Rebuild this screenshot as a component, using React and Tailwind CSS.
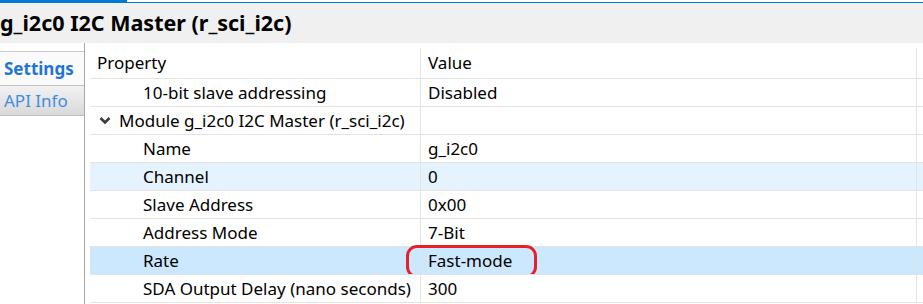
import React from 'react';

const rows = [
    { label: '10-bit slave addressing', value: 'Disabled', indent: true },
    { label: 'Module g_i2c0 I2C Master (r_sci_i2c)', value: '', group: true },
    { label: 'Name', value: 'g_i2c0', indent: true },
    { label: 'Channel', value: '0', indent: true, hover: true },
    { label: 'Slave Address', value: '0x00', indent: true },
    { label: 'Address Mode', value: '7-Bit', indent: true },
    { label: 'Rate', value: 'Fast-mode', indent: true, selected: true, marked: true },
    { label: 'SDA Output Delay (nano seconds)', value: '300', indent: true },
];

const Chevron = () => (
    <svg width="12" height="9" viewBox="0 0 12 9" className="shrink-0">
        <polyline points="1.5 2 6 6.5 10.5 2" fill="none" stroke="#3a3a3a" strokeWidth="2.6" />
    </svg>
);

export default function App() {
    return (
        <div className="w-[923px] h-[304px] overflow-hidden bg-white text-black" style={{ fontFamily: '"Noto Sans", "Open Sans", sans-serif' }}>
            {/* top accent */}
            <div className="flex h-[3px]">
                <div className="w-[127px] bg-[#0078d7]" />
                <div className="flex-1 border-b border-[#0078d7]" />
            </div>

            {/* title */}
            <div className="h-[40px] bg-[#f0f0f0] flex items-center text-[21.5px] font-bold">
                g_i2c0 I2C Master (r_sci_i2c)
            </div>

            <div className="flex">
                {/* tabs */}
                <div className="w-[85px] h-[261px] border-r border-[#a8a8a8] pt-[8px] shrink-0">
                    <div className="h-[34px] border-t border-[#c8c8c8] bg-[#fafafa] flex items-center pl-[4px] text-[17px] font-bold text-[#1f75d6]">
                        Settings
                    </div>
                    <div className="h-[31px] border-t border-b border-[#c0c0c0] bg-gradient-to-b from-[#f2f2f2] to-[#d9d9d9] flex items-center pl-[4px] text-[17px] text-[#3d8ee0]">
                        API Info
                    </div>
                </div>

                {/* property table */}
                <div className="flex-1 pl-[5px] pt-[5px] text-[17px]">
                    <div>
                        <div className="flex h-[30px] items-center">
                            <div className="w-[331px] pl-[7px] border-r border-[#e3e3e3] h-full flex items-center">Property</div>
                            <div className="w-[496px] pl-[7px] border-r border-[#e3e3e3] h-full flex items-center">Value</div>
                        </div>
                        {rows.map((row, i) => (
                            <div
                                key={i}
                                className={`relative flex h-[28px] border-t border-[#e3e3e3] ${row.selected ? 'bg-[#cce8ff]' : row.hover ? 'bg-[#e5f3ff]' : 'bg-white'}`}
                            >
                                <div className={`w-[331px] border-r border-[#e3e3e3] h-full flex items-center gap-[8px] ${row.group ? 'pl-[9px]' : 'pl-[53px]'}`}>
                                    {row.group && <Chevron />}
                                    <span className="whitespace-nowrap">{row.label}</span>
                                </div>
                                <div className="w-[496px] border-r border-[#e3e3e3] h-full flex items-center pl-[7px]">
                                    {row.value}
                                </div>
                                {row.marked && (
                                    <span className="absolute left-[316px] top-[-2px] w-[131px] h-[33px] border-[3.5px] border-[#e8202a] rounded-[11px]" />
                                )}
                            </div>
                        ))}
                        <div className="h-0 border-t border-[#e3e3e3]" />
                    </div>
                </div>
            </div>
        </div>
    );
}
